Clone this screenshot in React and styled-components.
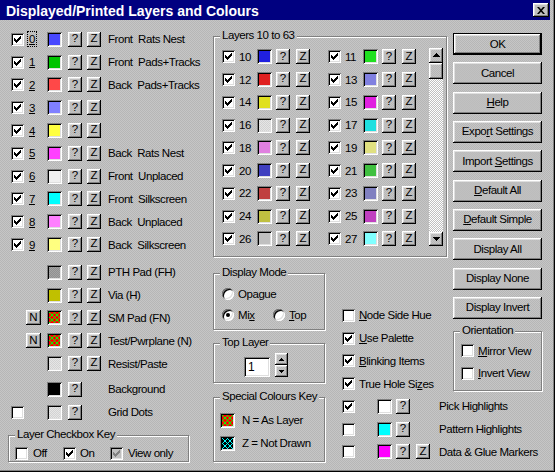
import React from 'react';
import styled, { createGlobalStyle, css } from 'styled-components';

const texture = css`
  background-color: #c0c0c0;
  background-image: repeating-conic-gradient(#c6c6c6 0 25%, #b6b6b6 0 50%);
  background-size: 2px 2px;
  background-attachment: fixed;
`;
const raised = css`
  box-shadow: inset -1px -1px 0 #000, inset 1px 1px 0 #fff, inset -2px -2px 0 #808080, inset 2px 2px 0 #dfdfdf;
`;
const sunken = css`
  box-shadow: inset 1px 1px 0 #808080, inset -1px -1px 0 #fff, inset 2px 2px 0 #000, inset -2px -2px 0 #dfdfdf;
`;

const GlobalStyle = createGlobalStyle`
  html, body { margin: 0; padding: 0; background: #c0c0c0; }
  body { font-family: "Liberation Sans", Arial, sans-serif; font-size: 11.5px; color: #000; }
  *, *::before, *::after { box-sizing: border-box; }
`;

const Window = styled.div`
  ${texture}
  width: 555px;
  height: 472px;
  display: flex;
  flex-direction: column;
  overflow: hidden;
  box-shadow: inset -1px -1px 0 #000, inset -2px -2px 0 #808080;
  letter-spacing: -0.45px;
`;

const TitleBar = styled.div`
  flex: none;
  width: 550px;
  height: 20px;
  background: #000080;
  color: #fff;
  display: flex;
  align-items: center;
  justify-content: space-between;
  padding: 0 1px 0 6px;
`;

const TitleText = styled.span`
  font-weight: bold;
  font-size: 14px;
  letter-spacing: 0;
  white-space: nowrap;
  padding-top: 2px;
`;

const CloseButton = styled.span`
  width: 16px;
  height: 14px;
  background: #c0c0c0;
  ${raised}
  display: inline-flex;
  align-items: center;
  justify-content: center;
  padding-right: 1px;
`;

const Body = styled.div`
  flex: 1;
  display: flex;
  min-height: 0;
`;

const LeftColumn = styled.div`
  flex: none;
  width: 213px;
  padding-top: 8px;
  display: flex;
  flex-direction: column;
`;

const RowStack = styled.div`
  display: flex;
  flex-direction: column;
  margin-top: ${p => p.$top || 0}px;
`;

const LayerRow = styled.div`
  height: 22.8px;
  flex: none;
  display: grid;
  grid-template-columns: ${p => p.$cols};
  align-items: center;
  padding-left: 11px;
  margin-top: ${p => (p.$gap ? 3 : 0)}px;
`;

const Blank = styled.span``;

const LayerNum = styled.span`
  justify-self: start;
  text-decoration: ${p => (p.$plain ? 'none' : 'underline')};
  line-height: 14px;
  height: 14px;
  padding: 0 1px;
  margin-left: -1px;
  ${p => p.$focus && css`outline: 1px dotted #000;`}
`;

const RowLabel = styled.span`
  white-space: pre;
`;

const CheckBox = styled.span`
  width: 13px;
  height: 13px;
  flex: none;
  display: inline-flex;
  background: ${p => (p.$disabled ? '#c0c0c0' : '#fff')};
  ${sunken}
`;

const PixelSvg = styled.svg`
  display: block;
`;

function Check({ checked, disabled }) {
  return (
    <CheckBox $disabled={disabled}>
      {checked && (
        <PixelSvg width="13" height="13" viewBox="0 0 13 13" shapeRendering="crispEdges">
          <path
            fill={disabled ? '#808080' : '#000'}
            d="M9 3h1v1h-1zM8 4h2v1h-2zM3 5h1v1h-1zM7 5h3v1h-3zM3 6h2v1h-2zM6 6h3v1h-3zM3 7h5v1h-5zM4 8h3v1h-3zM5 9h1v1h-1z"
          />
        </PixelSvg>
      )}
    </CheckBox>
  );
}

const SwatchBox = styled.span`
  width: 15px;
  height: 15px;
  flex: none;
  display: inline-block;
  padding: 2px;
  background-color: ${p => p.$color};
  ${p =>
    p.$stipple &&
    css`
      background-image: repeating-conic-gradient(${p.$stipple} 0 25%, transparent 0 50%);
      background-size: 2px 2px;
    `}
  ${sunken}
`;

const latticePath = (() => {
  const pts = new Set();
  for (let i = 0; i < 11; i++) {
    pts.add(`${i},${i}`);
    pts.add(`${10 - i},${i}`);
  }
  for (let x = 0; x < 11; x++) {
    for (let y = 0; y < 11; y++) {
      if (Math.abs(x - 5) + Math.abs(y - 5) === 5) pts.add(`${x},${y}`);
    }
  }
  return [...pts]
    .map(s => {
      const [x, y] = s.split(',');
      return `M${x} ${y}h1v1h-1z`;
    })
    .join('');
})();

function Swatch({ color, stipple, lattice }) {
  return (
    <SwatchBox $color={color} $stipple={stipple}>
      {lattice && (
        <PixelSvg width="11" height="11" viewBox="0 0 11 11" shapeRendering="crispEdges">
          <path d={latticePath} fill={lattice} />
        </PixelSvg>
      )}
    </SwatchBox>
  );
}

const SmallButton = styled.span`
  ${texture}
  ${raised}
  width: ${p => p.$w || 14}px;
  height: 15px;
  display: inline-flex;
  align-items: center;
  justify-content: center;
  line-height: 1;
  letter-spacing: 0;
  padding-bottom: 1px;
`;

const Group = styled.div`
  border: 1px solid #808080;
  box-shadow: inset 1px 1px 0 #fff, 1px 1px 0 #fff;
  display: flex;
  flex-direction: column;
`;

const Legend = styled.span`
  ${texture}
  align-self: flex-start;
  margin: -8px 0 0 6px;
  padding: 0 2px;
  height: 13px;
  line-height: 13px;
  white-space: nowrap;
`;

const KeyGroup = styled(Group)`
  width: 181px;
  height: 27px;
  margin: 11px 0 0 8px;
`;

const KeyRow = styled.div`
  display: grid;
  grid-template-columns: 48px 47px auto;
  padding-left: 6px;
  margin-top: 6px;
`;

const LabeledItem = styled.span`
  display: flex;
  align-items: center;
  gap: ${p => p.$gap || 4}px;
  white-space: nowrap;
`;

const RightGrid = styled.div`
  flex: 1;
  padding-top: 9px;
  display: grid;
  grid-template-columns: 112px 17px 105px 6px 89px 1fr;
  grid-template-rows: 233px 129px 75px;
  grid-template-areas:
    'layers layers layers . buttons .'
    'modes . checks . buttons .'
    'special . picks picks picks picks';
`;

const LayersGroup = styled(Group)`
  grid-area: layers;
  margin-top: 7px;
  height: 221px;
`;

const LayersBody = styled.div`
  display: flex;
  align-items: flex-start;
  padding-left: 8px;
  margin-top: 3.6px;
`;

const LayerGrid = styled.div`
  display: grid;
  grid-template-columns: repeat(2, 88px);
  column-gap: 18px;
  grid-auto-rows: 22.75px;
`;

const LayerCell = styled.div`
  display: grid;
  grid-template-columns: 17px 18px 19px 20px 14px;
  align-items: center;
`;

const ScrollBar = styled.div`
  width: 14px;
  height: 198px;
  margin: 2.4px 0 0 13px;
  display: flex;
  flex-direction: column;
`;

const ScrollButton = styled.span`
  ${texture}
  ${raised}
  flex: none;
  width: 14px;
  height: ${p => p.$h}px;
  display: flex;
  align-items: center;
  justify-content: center;
`;

const ScrollTrack = styled.span`
  flex: 1;
  background-color: #fff;
  background-image: repeating-conic-gradient(#c0c0c0 0 25%, #fff 0 50%);
  background-size: 2px 2px;
`;

const ButtonColumn = styled.div`
  grid-area: buttons;
  padding-top: 4px;
  display: flex;
  flex-direction: column;
  gap: 7.33px;
`;

const DialogButton = styled.span`
  ${texture}
  flex: none;
  height: 22px;
  display: flex;
  align-items: center;
  justify-content: center;
  white-space: pre;
  padding-bottom: 1px;
  ${p =>
    p.$default
      ? css`
          box-shadow: inset 0 0 0 1px #000, inset -2px -2px 0 #000, inset 2px 2px 0 #fff,
            inset -3px -3px 0 #808080, inset 3px 3px 0 #dfdfdf;
        `
      : raised}
`;

const OrientationGroup = styled(Group)`
  height: 60px;
  margin-top: 4.67px;
`;

const OptionList = styled.div`
  display: flex;
  flex-direction: column;
  padding-left: ${p => p.$left || 0}px;
  margin-top: ${p => p.$top || 0}px;
`;

const OptionRow = styled.div`
  height: ${p => p.$h || 22.8}px;
  flex: none;
  display: grid;
  grid-template-columns: 17px 1fr;
  align-items: center;
  white-space: nowrap;
`;

const ModesColumn = styled.div`
  grid-area: modes;
  display: flex;
  flex-direction: column;
`;

const ModeGroup = styled(Group)`
  height: 57px;
  margin-top: 11px;
`;

const RadioRow = styled.div`
  height: 21px;
  display: grid;
  grid-template-columns: 51px auto;
  align-items: center;
`;

const RadioCircle = styled.span`
  width: 12px;
  height: 12px;
  flex: none;
  border-radius: 50%;
  background: #fff;
  box-shadow: inset 1px 1px 0 #808080, inset -1px -1px 0 #fff, inset 2px 2px 0 #000, inset -2px -2px 0 #dfdfdf;
  display: inline-flex;
  align-items: center;
  justify-content: center;
  &::after {
    content: '';
    width: 4px;
    height: 4px;
    border-radius: 50%;
    background: #000;
    display: ${p => (p.$on ? 'block' : 'none')};
  }
`;

const TopLayerGroup = styled(Group)`
  height: 40px;
  margin-top: 13px;
`;

const SpinRow = styled.div`
  display: flex;
  align-items: flex-end;
  gap: 5px;
  padding-left: 30px;
  margin-top: 4px;
`;

const NumField = styled.span`
  width: 26px;
  height: 20px;
  background: #fff;
  ${sunken}
  padding-left: 4px;
  line-height: 20px;
  font-size: 12px;
`;

const Spinner = styled.span`
  display: flex;
  flex-direction: column;
`;

const SpinButton = styled.span`
  ${texture}
  ${raised}
  width: 13px;
  height: 12px;
  display: flex;
  align-items: center;
  justify-content: center;
`;

const SpecialGroup = styled(Group)`
  grid-area: special;
  height: 65px;
  margin-top: 6px;
`;

const SpecialRow = styled.div`
  height: 23px;
  display: flex;
  align-items: center;
  gap: 7px;
  padding-left: 6px;
`;

const ChecksColumn = styled.div`
  grid-area: checks;
  padding-top: 42px;
  display: flex;
  flex-direction: column;
`;

const PicksColumn = styled.div`
  grid-area: picks;
  padding-top: 4px;
  display: flex;
  flex-direction: column;
`;

const PickRow = styled.div`
  height: 22.8px;
  display: grid;
  grid-template-columns: 35px 19px 20px 23px 1fr;
  align-items: center;
  white-space: nowrap;
`;

const topLayers = [
  { n: '0', color: '#4848ff', label: 'Front  Rats Nest', focus: true },
  { n: '1', color: '#00c400', label: 'Front  Pads+Tracks' },
  { n: '2', color: '#ff4848', label: 'Back  Pads+Tracks' },
  { n: '3', color: '#8080ff', label: '' },
  { n: '4', color: '#ffff40', label: '' },
  { n: '5', color: '#ff40ff', label: 'Back  Rats Nest' },
  { n: '6', color: '#f0f0f0', label: 'Front  Unplaced' },
  { n: '7', color: '#00ffff', label: 'Front  Silkscreen' },
  { n: '8', color: '#ff80ff', label: 'Back  Unplaced' },
  { n: '9', color: '#ffff80', label: 'Back  Silkscreen' },
];

const lowerRows = [
  { swatch: { color: '#a4a4a4', stipple: '#909090' }, z: true, label: 'PTH Pad (FH)' },
  { swatch: { color: '#c0c000' }, z: true, label: 'Via (H)' },
  { n: true, swatch: { color: '#ff0000', lattice: '#00ff00' }, z: true, label: 'SM Pad (FN)' },
  { n: true, swatch: { color: '#ff0000', lattice: '#00ff00' }, z: true, label: 'Test/Pwrplane (N)' },
  { swatch: { color: '#e6e6e6', stipple: '#d2d2d2' }, z: true, label: 'Resist/Paste' },
  { swatch: { color: '#000000' }, z: false, label: 'Background', gap: true },
  { check: true, swatch: { color: '#e6e6e6', stipple: '#d2d2d2' }, z: false, label: 'Grid Dots' },
];

const highLayers = [
  ['10', '#2020e0'], ['11', '#20e020'],
  ['12', '#e02020'], ['13', '#8080e0'],
  ['14', '#e0e020'], ['15', '#e020e0'],
  ['16', '#e6e6e6', '#d2d2d2'], ['17', '#20e0e0'],
  ['18', '#e080e0'], ['19', '#e0e080'],
  ['20', '#4040c0'], ['21', '#40c040'],
  ['22', '#c04040'], ['23', '#8080c0'],
  ['24', '#c0c040'], ['25', '#c040c0'],
  ['26', '#c0c0c0'], ['27', '#80ffff'],
];

const dialogButtons = [
  { key: 'ok', text: 'OK', def: true },
  { key: 'cancel', text: 'Cancel' },
  { key: 'help', text: <><u>H</u>elp</> },
  { key: 'export', text: <>Expo<u>r</u>t Settings</> },
  { key: 'import', text: <>Import <u>S</u>ettings</> },
  { key: 'defall', text: <><u>D</u>efault All</> },
  { key: 'defsimple', text: <><u>D</u>efault Simple</> },
  { key: 'all', text: 'Display All' },
  { key: 'none', text: 'Display None' },
  { key: 'invert', text: 'Display Invert' },
];

const options = [
  { key: 'node', checked: false, text: <><u>N</u>ode Side Hue</> },
  { key: 'palette', checked: true, text: <><u>U</u>se Palette</> },
  { key: 'blink', checked: true, text: <><u>B</u>linking Items</> },
  { key: 'hole', checked: true, text: <>True Hole Si<u>z</u>es</> },
];

const picks = [
  { key: 'pick', checked: true, color: '#ffffff', z: false, label: 'Pick Highlights' },
  { key: 'pattern', checked: false, color: '#00ffff', z: false, label: 'Pattern Highlights' },
  { key: 'data', checked: false, color: '#ff00ff', z: true, label: 'Data & Glue Markers' },
];

const UpArrow = () => (
  <PixelSvg width="7" height="4" viewBox="0 0 7 4" shapeRendering="crispEdges">
    <path d="M3 0h1v1h1v1h1v1h1v1H0V3h1V2h1V1h1z" fill="#000" />
  </PixelSvg>
);
const DownArrow = () => (
  <PixelSvg width="7" height="4" viewBox="0 0 7 4" shapeRendering="crispEdges">
    <path d="M0 0h7v1H6v1H5v1H4v1H3V3H2V2H1V1H0z" fill="#000" />
  </PixelSvg>
);
const SmallUp = () => (
  <PixelSvg width="5" height="3" viewBox="0 0 5 3" shapeRendering="crispEdges">
    <path d="M2 0h1v1h1v1h1v1H0V2h1V1h1z" fill="#000" />
  </PixelSvg>
);
const SmallDown = () => (
  <PixelSvg width="5" height="3" viewBox="0 0 5 3" shapeRendering="crispEdges">
    <path d="M0 0h5v1H4v1H3v1H2V2H1V1H0z" fill="#000" />
  </PixelSvg>
);

export default function App() {
  return (
    <>
      <GlobalStyle />
      <Window>
        <TitleBar>
          <TitleText>Displayed/Printed Layers and Colours</TitleText>
          <CloseButton>
            <PixelSvg width="8" height="7" viewBox="0 0 8 7">
              <path d="M0 0h2l2 2.3L6 0h2L5 3.5 8 7H6L4 4.7 2 7H0l3-3.5z" fill="#000" />
            </PixelSvg>
          </CloseButton>
        </TitleBar>
        <Body>
          <LeftColumn>
            <RowStack>
              {topLayers.map(l => (
                <LayerRow key={l.n} $cols="18px 18px 21px 19px 21px 1fr">
                  <Check checked />
                  <LayerNum $focus={l.focus}>{l.n}</LayerNum>
                  <Swatch color={l.color} />
                  <SmallButton>?</SmallButton>
                  <SmallButton>Z</SmallButton>
                  <RowLabel>{l.label}</RowLabel>
                </LayerRow>
              ))}
            </RowStack>
            <RowStack $top={5}>
              {lowerRows.map(r => (
                <LayerRow key={r.label} $cols="15px 21px 21px 19px 21px 1fr" $gap={r.gap}>
                  {r.check ? <Check /> : <Blank />}
                  {r.n ? <SmallButton $w={15}>N</SmallButton> : <Blank />}
                  <Swatch {...r.swatch} />
                  <SmallButton>?</SmallButton>
                  {r.z ? <SmallButton>Z</SmallButton> : <Blank />}
                  <RowLabel>{r.label}</RowLabel>
                </LayerRow>
              ))}
            </RowStack>
            <KeyGroup>
              <Legend>Layer Checkbox Key</Legend>
              <KeyRow>
                <LabeledItem $gap={5}><Check /><span>Off</span></LabeledItem>
                <LabeledItem $gap={4}><Check checked /><span>On</span></LabeledItem>
                <LabeledItem $gap={5}><Check checked disabled /><span>View only</span></LabeledItem>
              </KeyRow>
            </KeyGroup>
          </LeftColumn>

          <RightGrid>
            <LayersGroup>
              <Legend>Layers 10 to 63</Legend>
              <LayersBody>
                <LayerGrid>
                  {highLayers.map(([n, color, stipple]) => (
                    <LayerCell key={n}>
                      <Check checked />
                      <LayerNum $plain>{n}</LayerNum>
                      <Swatch color={color} stipple={stipple} />
                      <SmallButton>?</SmallButton>
                      <SmallButton>Z</SmallButton>
                    </LayerCell>
                  ))}
                </LayerGrid>
                <ScrollBar>
                  <ScrollButton $h={15}><UpArrow /></ScrollButton>
                  <ScrollButton $h={16} />
                  <ScrollTrack />
                  <ScrollButton $h={14}><DownArrow /></ScrollButton>
                </ScrollBar>
              </LayersBody>
            </LayersGroup>

            <ButtonColumn>
              {dialogButtons.map(b => (
                <DialogButton key={b.key} $default={b.def}><span>{b.text}</span></DialogButton>
              ))}
              <OrientationGroup>
                <Legend>Orientation</Legend>
                <OptionList $left={7} $top={2.5}>
                  <OptionRow $h={22.6}><Check /><span><u>M</u>irror View</span></OptionRow>
                  <OptionRow $h={22.6}><Check /><span><u>I</u>nvert View</span></OptionRow>
                </OptionList>
              </OrientationGroup>
            </ButtonColumn>

            <ModesColumn>
              <ModeGroup>
                <Legend>Display Mode</Legend>
                <OptionList $left={8} $top={4.5}>
                  <RadioRow>
                    <LabeledItem><RadioCircle /><span>Opa<u>g</u>ue</span></LabeledItem>
                  </RadioRow>
                  <RadioRow>
                    <LabeledItem><RadioCircle $on /><span>Mi<u>x</u></span></LabeledItem>
                    <LabeledItem><RadioCircle /><span><u>T</u>op</span></LabeledItem>
                  </RadioRow>
                </OptionList>
              </ModeGroup>
              <TopLayerGroup>
                <Legend>Top Layer</Legend>
                <SpinRow>
                  <NumField>1</NumField>
                  <Spinner>
                    <SpinButton><SmallUp /></SpinButton>
                    <SpinButton><SmallDown /></SpinButton>
                  </Spinner>
                </SpinRow>
              </TopLayerGroup>
            </ModesColumn>

            <ChecksColumn>
              {options.map(o => (
                <OptionRow key={o.key}>
                  <Check checked={o.checked} />
                  <span>{o.text}</span>
                </OptionRow>
              ))}
            </ChecksColumn>

            <SpecialGroup>
              <Legend>Special Colours Key</Legend>
              <OptionList $top={5.5}>
                <SpecialRow>
                  <Swatch color="#ff0000" lattice="#00ff00" />
                  <span>N = As Layer</span>
                </SpecialRow>
                <SpecialRow>
                  <Swatch color="#000000" lattice="#00ffff" />
                  <span>Z = Not Drawn</span>
                </SpecialRow>
              </OptionList>
            </SpecialGroup>

            <PicksColumn>
              {picks.map(p => (
                <PickRow key={p.key}>
                  <Check checked={p.checked} />
                  <Swatch color={p.color} />
                  <SmallButton>?</SmallButton>
                  {p.z ? <SmallButton>Z</SmallButton> : <Blank />}
                  <span>{p.label}</span>
                </PickRow>
              ))}
            </PicksColumn>
          </RightGrid>
        </Body>
      </Window>
    </>
  );
}
